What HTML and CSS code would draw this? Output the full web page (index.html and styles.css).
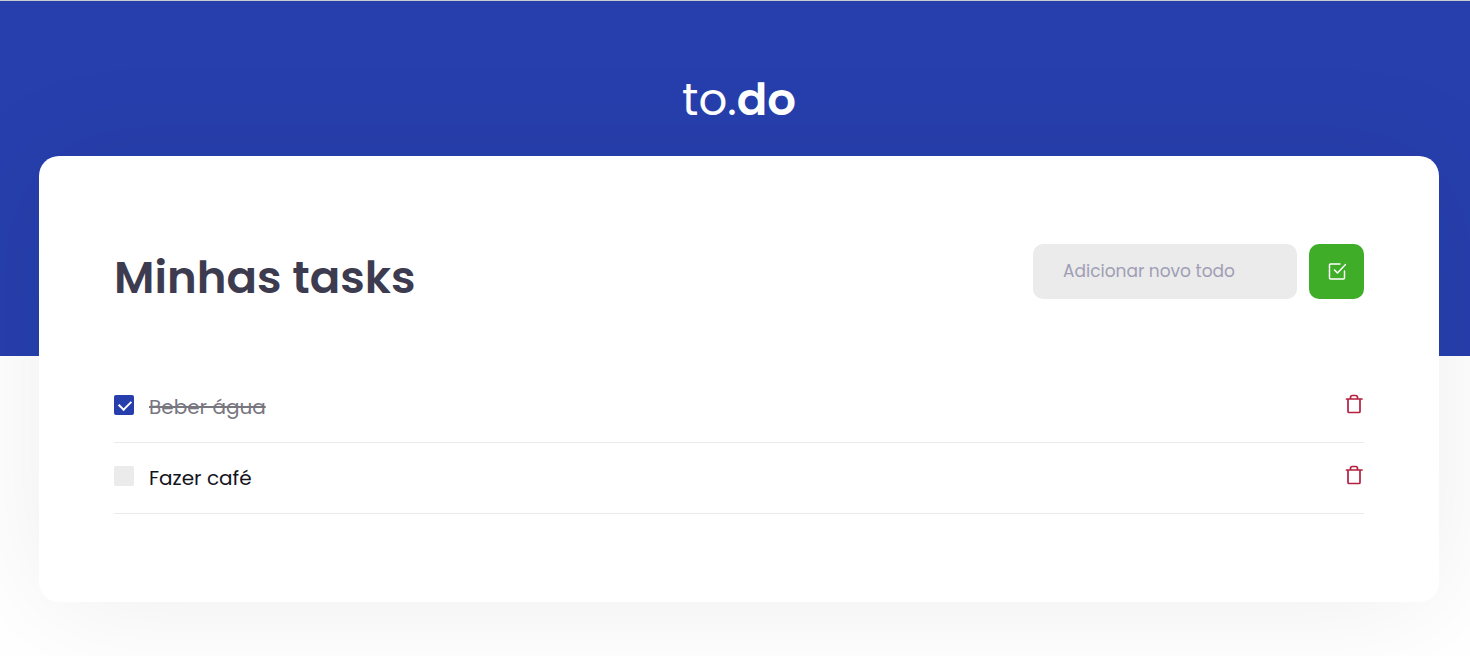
FILE: index.html
```html
<!DOCTYPE html>
<html lang="pt-BR">
<head>
<meta charset="utf-8">
<meta name="viewport" content="width=device-width, initial-scale=1">
<title>to.do</title>
<link rel="stylesheet" href="styles.css">
</head>
<body>
<div class="page">
  <header class="header">
    <div class="logo">to.<strong>do</strong></div>
  </header>
  <main class="card">
    <div class="card-head">
      <h1 class="title">Minhas tasks</h1>
      <form class="new-task">
        <input class="new-task-input" type="text" placeholder="Adicionar novo todo" aria-label="Adicionar novo todo">
        <button class="add-button" type="button" aria-label="Adicionar">
          <svg width="18" height="18" viewBox="0 0 18 18" fill="none" stroke="currentColor" stroke-width="1.5" stroke-linecap="round" stroke-linejoin="round"><path d="M12 1H2.500a1 1 0 0 0-1 1v13a1 1 0 0 0 1 1h13a1 1 0 0 0 1-1V8"/><path d="M6.500 7l3 3 8-8.500"/></svg>
        </button>
      </form>
    </div>
    <ul class="tasks">
      <li class="task">
        <label class="task-label"><input class="check" type="checkbox" checked><span class="task-name">Beber água</span></label>
        <button class="remove" type="button" aria-label="Remover Beber água">
          <svg width="20" height="20" viewBox="0 0 20 20" fill="none" stroke="currentColor" stroke-width="1.7" stroke-linecap="round" stroke-linejoin="round"><path d="M2.500 5h15.500M4 5v12.500a1 1 0 0 0 1 1h10a1 1 0 0 0 1-1V5M6.500 4.500V3.500a2 2 0 0 1 2-2h3a2 2 0 0 1 2 2v1"/></svg>
        </button>
      </li>
      <li class="task">
        <label class="task-label"><input class="check" type="checkbox"><span class="task-name">Fazer café</span></label>
        <button class="remove" type="button" aria-label="Remover Fazer café">
          <svg width="20" height="20" viewBox="0 0 20 20" fill="none" stroke="currentColor" stroke-width="1.7" stroke-linecap="round" stroke-linejoin="round"><path d="M2.500 5h15.500M4 5v12.500a1 1 0 0 0 1 1h10a1 1 0 0 0 1-1V5M6.500 4.500V3.500a2 2 0 0 1 2-2h3a2 2 0 0 1 2 2v1"/></svg>
        </button>
      </li>
    </ul>
  </main>
</div>
</body>
</html>
```
FILE: styles.css
```css
* {
  box-sizing: border-box;
  margin: 0;
  padding: 0;
}

body {
  background: #fff;
  color: #15131d;
  font-family: Poppins, Inter, "Open Sans", sans-serif;
}

button,
input {
  border: 0;
  font: inherit;
}

.page {
  border-top: 1px solid #c8ccd0;
  padding: 0 31px 54px 39px;
  background: linear-gradient(#273fad 355px, #fff 355px);
  overflow: hidden;
}

.header {
  padding: 69px 0 26px;
}

.logo {
  color: #fff;
  font-size: 45px;
  font-weight: 400;
  line-height: 60px;
  text-align: center;
}

.logo strong {
  font-weight: 600;
}

.card {
  max-width: 1400px;
  margin: 0 auto;
  padding: 88px 75px;
  border-radius: 20px;
  background: #fff;
  box-shadow: 0 4px 120px rgba(0, 0, 0, 0.07);
}

.card-head {
  display: flex;
  flex-wrap: wrap;
  align-items: flex-start;
  justify-content: space-between;
  gap: 12px;
}

.title {
  padding-top: 6px;
  color: #3d3b4f;
  font-size: 45px;
  font-weight: 600;
  line-height: 56px;
}

.new-task {
  display: flex;
  gap: 12px;
}

.new-task-input {
  width: 264px;
  height: 55px;
  padding: 0 30px 2px;
  border-radius: 10px;
  background: #ebebeb;
  color: #3d3b4f;
  font-size: 17px;
}

.new-task-input::placeholder {
  color: #a09eb5;
  opacity: 1;
}

.add-button {
  display: flex;
  align-items: center;
  justify-content: center;
  width: 55px;
  height: 55px;
  border-radius: 10px;
  background: #3fad27;
  color: #fff;
  cursor: pointer;
}

.tasks {
  margin-top: 66px;
  list-style: none;
}

.task {
  display: flex;
  align-items: center;
  justify-content: space-between;
  height: 71px;
  padding-bottom: 4px;
  border-bottom: 1px solid #ebebeb;
}

.task-label {
  display: flex;
  align-items: center;
  gap: 15px;
  font-size: 20px;
  line-height: 30px;
  cursor: pointer;
}

.check {
  display: grid;
  place-items: center;
  appearance: none;
  width: 20px;
  height: 20px;
  border-radius: 2px;
  background: #ebebeb;
}

.check:checked {
  background: #273fad;
}

.check:checked::before {
  content: "";
  width: 10px;
  height: 6px;
  margin: 0 0 2px 2px;
  border: solid #fff;
  border-width: 0 0 2px 2px;
  transform: rotate(-45deg);
}

.task-name {
  padding-top: 4px;
}

.check:checked + .task-name {
  color: #78767f;
  text-decoration: line-through;
}

.remove {
  display: flex;
  padding-bottom: 2px;
  background: none;
  color: #b3203f;
  cursor: pointer;
}
```
